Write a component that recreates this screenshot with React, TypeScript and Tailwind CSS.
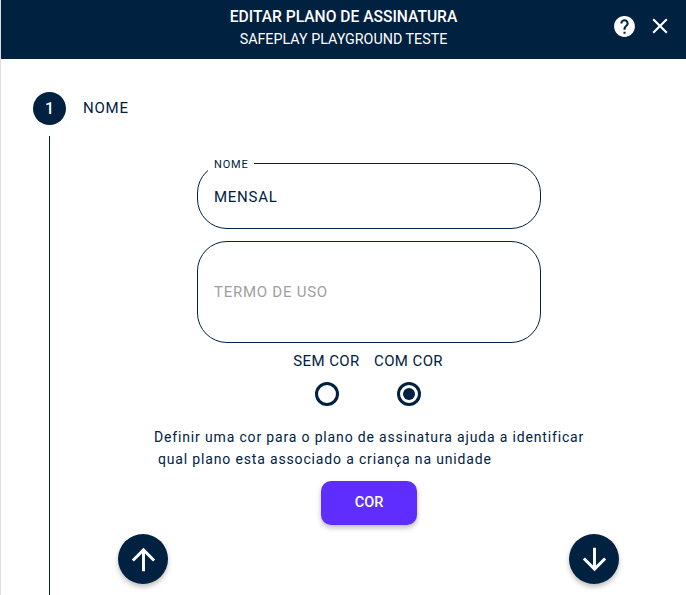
const Radio = ({ label, checked }: { label: string; checked?: boolean }) => (
  <div className="flex w-[82px] flex-col items-center">
    <span className="text-[15px] leading-[16px] tracking-[0.4px] whitespace-nowrap text-[#00213f]">{label}</span>
    <span className="mt-[13px] flex h-[24px] w-[24px] items-center justify-center rounded-full border-[3px] border-[#00213f]">
      {checked && <span className="h-[12px] w-[12px] rounded-full bg-[#00213f]" />}
    </span>
  </div>
);

const ArrowButton = ({ path }: { path: string }) => (
  <button className="flex h-[50px] w-[50px] items-center justify-center rounded-full bg-[#00213f] shadow-[0_3px_5px_rgba(0,0,0,0.25)]">
    <svg viewBox="0 0 24 24" className="h-[35px] w-[35px] fill-white">
      <path d={path} />
    </svg>
  </button>
);

export default function App() {
  return (
    <div className="flex h-[595px] w-[686px] flex-col overflow-hidden border-l border-[#dddddd] bg-white font-['Roboto',sans-serif]">
      <header className="relative flex h-[59px] shrink-0 flex-col items-center justify-center bg-[#00213f] pb-[4px] leading-[20px] text-white">
        <h1 className="text-[15.6px] font-medium">EDITAR PLANO DE ASSINATURA</h1>
        <p className="mt-[2px] text-[14.3px]">SAFEPLAY PLAYGROUND TESTE</p>
        <div className="absolute top-[13px] left-[611px] flex items-center gap-[10px]">
          <svg viewBox="0 0 24 24" className="h-[25px] w-[25px] fill-white">
            <path d="M12 2C6.48 2 2 6.48 2 12s4.48 10 10 10 10-4.48 10-10S17.52 2 12 2zm1 17h-2v-2h2v2zm2.07-7.75l-.9.92C13.45 12.9 13 13.5 13 15h-2v-.5c0-1.1.45-2.1 1.17-2.83l1.24-1.26c.37-.36.59-.86.59-1.41 0-1.1-.9-2-2-2s-2 .9-2 2H8c0-2.21 1.79-4 4-4s4 1.79 4 4c0 .88-.36 1.68-.93 2.25z" />
          </svg>
          <svg viewBox="0 0 24 24" className="h-[26px] w-[26px] fill-white">
            <path d="M19 6.41L17.59 5 12 10.59 6.41 5 5 6.41 10.59 12 5 17.59 6.41 19 12 13.41 17.59 19 19 17.59 13.41 12z" />
          </svg>
        </div>
      </header>

      <main className="flex min-h-0 flex-1 flex-col pt-[33px] pl-[32px]">
        <div className="flex items-center gap-[17px]">
          <span className="flex h-[33px] w-[33px] items-center justify-center rounded-full bg-[#00213f] text-[16px] font-medium text-white">1</span>
          <span className="text-[15px] tracking-[0.8px] text-[#00213f]">NOME</span>
        </div>

        <div className="mt-[11px] flex min-h-0 flex-1">
          <div className="ml-[16px] w-px shrink-0 bg-[#00213f]" />
          <div className="ml-[68px] flex w-[501px] flex-col">
            <div className="ml-[79px] flex w-[344px] flex-col pt-[27px]">
              <div className="relative flex h-[66px] items-center rounded-[30px] border border-[#00213f] pl-[16px]">
                <span className="absolute top-[-5px] left-[10px] bg-white pr-[6px] pb-[3px] pl-[6px] text-[11px] leading-[11px] tracking-[0.8px] text-[#00213f]">NOME</span>
                <input
                  readOnly
                  value="MENSAL"
                  className="mt-[3px] w-full bg-transparent text-[15px] tracking-[0.75px] text-[#00213f] outline-none"
                />
              </div>
              <div className="mt-[12px] flex h-[102px] items-center rounded-[30px] border border-[#00213f] pl-[16px] text-[15px] tracking-[0.75px] text-[#a0a0a0]">
                TERMO DE USO
              </div>
            </div>

            <div className="mt-[10px] flex justify-center pr-[2px]">
              <Radio label="SEM COR" />
              <Radio label="COM COR" checked />
            </div>

            <p className="mt-[20px] ml-[36px] text-[14px] leading-[22px] tracking-[0.84px] whitespace-nowrap text-[#00213f]">
              Definir uma cor para o plano de assinatura ajuda a identificar
              <span className="block pl-[4px]">qual plano esta associado a criança na unidade</span>
            </p>

            <button className="mt-[11px] ml-[203px] h-[44px] w-[96px] rounded-[10px] bg-[#5f2eff] text-[14.5px] font-medium text-white shadow-[0_3px_5px_rgba(0,0,0,0.25)]">
              COR
            </button>

            <div className="mt-[9px] flex justify-between">
              <ArrowButton path="M4 12l1.41 1.41L11 7.83V20h2V7.83l5.58 5.59L20 12l-8-8-8 8z" />
              <ArrowButton path="M20 12l-1.41-1.41L13 16.17V4h-2v12.17l-5.58-5.59L4 12l8 8 8-8z" />
            </div>
          </div>
        </div>
      </main>
    </div>
  );
}
